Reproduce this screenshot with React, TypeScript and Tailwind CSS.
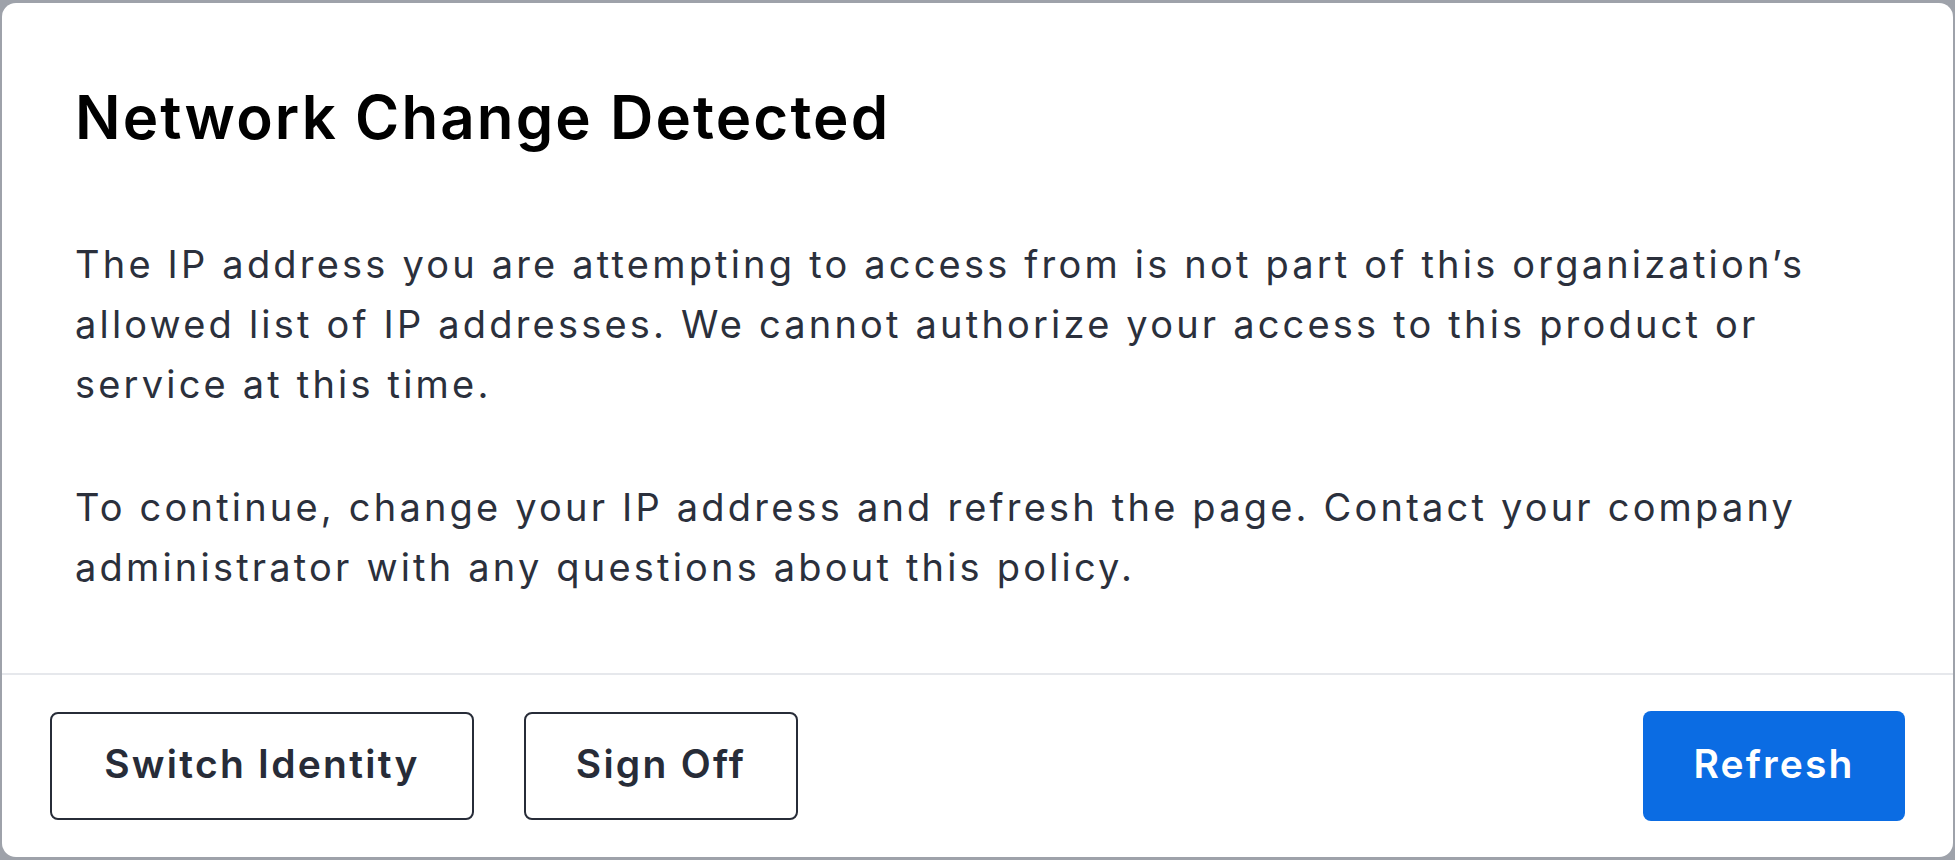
import React from 'react';

const App: React.FC = () => {
  return (
    <div className="h-[860px] w-[1955px] bg-[#9ea2aa] pt-[3px] pb-[3px] pl-[2px] pr-[2px] font-['Inter','Liberation_Sans',sans-serif]">
      <div className="flex h-full flex-col overflow-hidden rounded-[14px] bg-white">
        {/* body */}
        <div className="flex-1 px-[73px] pt-[76px]">
          <h1 className="text-[60px] font-semibold leading-[76px] tracking-[0.035em] text-black">
            Network Change Detected
          </h1>
          <div className="mt-[79px] text-[38px] leading-[60px] tracking-[0.084em] text-[#2b303c]">
            <p>
              The IP address you are attempting to access from is not part of this organization’s allowed list of IP
              addresses. We cannot authorize your access to this product or service at this time.
            </p>
            <p className="mt-[63px]">
              To continue, change your IP address and refresh the page. Contact your company administrator with any
              questions about this policy.
            </p>
          </div>
        </div>

        {/* footer */}
        <div className="flex h-[184px] items-center justify-between border-t-2 border-[#e6e8ec] px-[48px]">
          <div className="flex gap-[50px]">
            <button className="h-[108px] w-[424px] rounded-[8px] border-2 border-[#272c38] pb-[3px] text-[39px] font-semibold tracking-[0.058em] text-[#272c38]">
              Switch Identity
            </button>
            <button className="h-[108px] w-[274px] rounded-[8px] border-2 border-[#272c38] pb-[3px] text-[39px] font-semibold tracking-[0.058em] text-[#272c38]">
              Sign Off
            </button>
          </div>
          <button className="h-[110px] w-[262px] rounded-[8px] bg-[#0b6ce3] pb-[3px] text-[39px] font-semibold tracking-[0.055em] text-white">
            Refresh
          </button>
        </div>
      </div>
    </div>
  );
};

export default App;
